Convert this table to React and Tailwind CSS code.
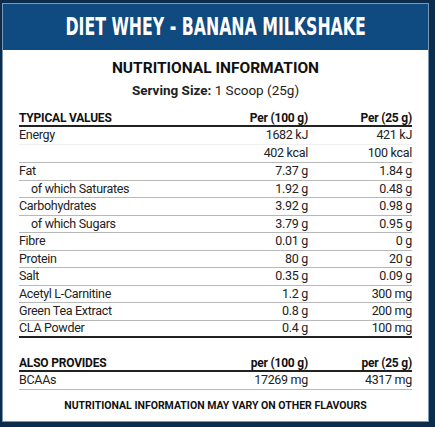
export default function App() {
  const rows = [
    ["Fat", "7.37 g", "1.84 g"],
    ["of which Saturates", "1.92 g", "0.48 g", true],
    ["Carbohydrates", "3.92 g", "0.98 g"],
    ["of which Sugars", "3.79 g", "0.95 g", true],
    ["Fibre", "0.01 g", "0 g"],
    ["Protein", "80 g", "20 g"],
    ["Salt", "0.35 g", "0.09 g"],
    ["Acetyl L-Carnitine", "1.2 g", "300 mg"],
    ["Green Tea Extract", "0.8 g", "200 mg"],
    ["CLA Powder", "0.4 g", "100 mg"],
  ];

  return (
    <div className="w-[435px] h-[427px] bg-[#0c2c4c] pt-[3px] pl-[2px] pr-[6px] pb-[5px]" style={{ fontFamily: "Roboto, 'Liberation Sans', sans-serif" }}>
      <div className="h-full border border-[#7c97b6] bg-white flex flex-col">
        {/* titel */}
        <div className="h-[46px] bg-[#0f4a80] flex items-center justify-center">
          <h1 className="text-white text-[24px] font-bold leading-none whitespace-nowrap scale-x-[0.73]" style={{ fontFamily: "'Liberation Sans Narrow', 'DejaVu Sans Condensed', Roboto, sans-serif" }}>
            DIET WHEY - BANANA MILKSHAKE
          </h1>
        </div>

        <div className="px-[16px] text-[#222]">
          <h2 className="text-center font-bold text-[15.5px] text-[#111] mt-[8px] leading-[20px]">NUTRITIONAL INFORMATION</h2>
          <p className="text-center text-[13.5px] mt-[3px] leading-[18px]">
            <span className="font-bold">Serving Size:</span> 1 Scoop (25g)
          </p>

          {/* tabel utama */}
          <div className="mt-[9px] text-[12.5px] tracking-[-0.3px]">
            <div className="grid grid-cols-[1fr_130px_104px] h-[16px] items-end font-bold text-[#111] text-[12px] tracking-[-0.2px] leading-none border-b-2 border-[#222] pb-[1px] box-content">
              <span>TYPICAL VALUES</span>
              <span className="text-right">Per (100 g)</span>
              <span className="text-right">Per (25 g)</span>
            </div>
            <div className="grid grid-cols-[1fr_130px_104px] h-[18px] items-center leading-none border-b border-[#f0f0f0]">
              <span>Energy</span>
              <span className="text-right">1682 kJ</span>
              <span className="text-right">421 kJ</span>
            </div>
            <div className="grid grid-cols-[1fr_130px_104px] h-[18px] items-center leading-none border-b border-[#b8b8b8]">
              <span></span>
              <span className="text-right">402 kcal</span>
              <span className="text-right">100 kcal</span>
            </div>
            {rows.map((r, i) => (
              <div
                key={i}
                className={`grid grid-cols-[1fr_130px_104px] h-[17.5px] items-center leading-none border-b ${i === rows.length - 1 ? "border-[#222] border-b-2" : "border-[#b8b8b8]"}`}
              >
                <span className={r[3] ? "pl-[12px]" : ""}>{r[0]}</span>
                <span className="text-right">{r[1]}</span>
                <span className="text-right">{r[2]}</span>
              </div>
            ))}
          </div>

          {/* also provides */}
          <div className="mt-[15px] text-[12.5px] tracking-[-0.3px]">
            <div className="grid grid-cols-[1fr_130px_104px] h-[16px] items-end font-bold text-[#111] text-[12px] tracking-[-0.2px] leading-none border-b-2 border-[#222] pb-[1px] box-content">
              <span>ALSO PROVIDES</span>
              <span className="text-right">per (100 g)</span>
              <span className="text-right">per (25 g)</span>
            </div>
            <div className="grid grid-cols-[1fr_130px_104px] h-[17.5px] items-center leading-none border-b border-[#b8b8b8]">
              <span>BCAAs</span>
              <span className="text-right">17269 mg</span>
              <span className="text-right">4317 mg</span>
            </div>
          </div>

          <p className="text-center font-bold text-[10.5px] text-[#111] mt-[9px] leading-[14px]">NUTRITIONAL INFORMATION MAY VARY ON OTHER FLAVOURS</p>
        </div>
      </div>
    </div>
  );
}
